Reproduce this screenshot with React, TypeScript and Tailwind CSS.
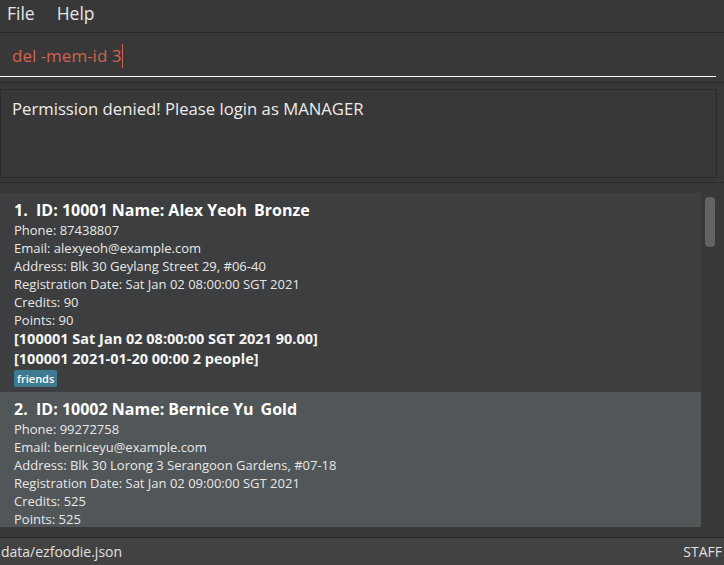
const members = [
  {
    index: 1,
    id: '10001',
    name: 'Alex Yeoh',
    tier: 'Bronze',
    phone: '87438807',
    email: 'alexyeoh@example.com',
    address: 'Blk 30 Geylang Street 29, #06-40',
    date: 'Sat Jan 02 08:00:00 SGT 2021',
    credits: '90',
    points: '90',
    extras: ['[100001 Sat Jan 02 08:00:00 SGT 2021 90.00]', '[100001 2021-01-20 00:00 2 people]'],
    tags: ['friends'],
  },
  {
    index: 2,
    id: '10002',
    name: 'Bernice Yu',
    tier: 'Gold',
    phone: '99272758',
    email: 'berniceyu@example.com',
    address: 'Blk 30 Lorong 3 Serangoon Gardens, #07-18',
    date: 'Sat Jan 02 09:00:00 SGT 2021',
    credits: '525',
    points: '525',
    extras: [],
    tags: [],
  },
];

type Member = (typeof members)[number];

const MemberCard = ({ m, odd }: { m: Member; odd: boolean }) => (
  <div className={`shrink-0 px-[14px] pt-[7px] pb-[5px] ${odd ? 'bg-[#3c3e3f]' : 'bg-[#515658]'}`}>
    <div className="text-[16px] leading-[21px] font-bold text-white whitespace-nowrap">
      {m.index}.&nbsp;&nbsp;ID: {m.id} Name: {m.name}
      <span className="ml-[7px]">{m.tier}</span>
    </div>
    <div className="text-[13px] leading-[18px] text-[#e8e8e8]">
      <div>Phone: {m.phone}</div>
      <div>Email: {m.email}</div>
      <div>Address: {m.address}</div>
      <div>Registration Date: {m.date}</div>
      <div>Credits: {m.credits}</div>
      <div>Points: {m.points}</div>
    </div>
    {m.extras.map((e) => (
      <div key={e} className="text-[14.5px] leading-[20px] font-bold text-[#f4f4f4] whitespace-nowrap">
        {e}
      </div>
    ))}
    {m.tags.length > 0 && (
      <div className="flex gap-1 mt-[1px]">
        {m.tags.map((t) => (
          <span
            key={t}
            className="h-[17px] px-[3px] rounded-[2px] bg-[#3e7b91] text-white text-[11px] leading-[17px] font-semibold"
          >
            {t}
          </span>
        ))}
      </div>
    )}
  </div>
);

export default function App() {
  return (
    <div
      className="w-[724px] h-[565px] bg-[#383838] flex flex-col overflow-hidden"
      style={{ fontFamily: '"Open Sans", "Liberation Sans", sans-serif' }}
    >
      {/* menu */}
      <div className="h-[33px] shrink-0 flex items-center gap-[22px] pl-[7px] pb-[5px] text-[17.5px] text-[#e6e6e6] border-b border-[#2a2a2a]">
        <span>File</span>
        <span>Help</span>
      </div>

      {/* command box */}
      <div className="h-[50px] shrink-0 border-b border-[#2a2a2a] pr-[8px]">
        <div className="h-[44px] flex items-center pl-[12px] pt-[2px] border-b border-white">
          <span className="text-[17px] text-[#d2634f]">del -mem-id 3</span>
          <span className="w-[1px] h-[24px] bg-[#d2634f] ml-[1px]" />
        </div>
      </div>

      {/* result */}
      <div className="h-[100px] shrink-0 pt-[6px] pr-[7px] border-b border-[#2a2a2a]">
        <div className="h-[89px] border border-[#2b2b2b] pl-[11px] pt-[6px] text-[16.7px] text-[#ececec]">
          Permission denied! Please login as MANAGER
        </div>
      </div>

      {/* list */}
      <div className="flex-1 min-h-0 flex pt-[10px] pb-[10px]">
        <div className="w-[701px] flex flex-col overflow-hidden">
          {members.map((m, i) => (
            <MemberCard key={m.id} m={m} odd={i % 2 === 0} />
          ))}
        </div>
        <div className="flex-1 pl-[4px] pt-[4px]">
          <div className="w-[10px] h-[50px] rounded-[4px] bg-[#626262]" />
        </div>
      </div>

      {/* status */}
      <div className="h-[28px] shrink-0 flex items-center justify-between border-t border-[#2a2a2a] bg-[#424242] text-[14px] text-[#e0e0e0] pl-[1px] pr-[2px]">
        <span>data/ezfoodie.json</span>
        <span>STAFF</span>
      </div>
    </div>
  );
}
